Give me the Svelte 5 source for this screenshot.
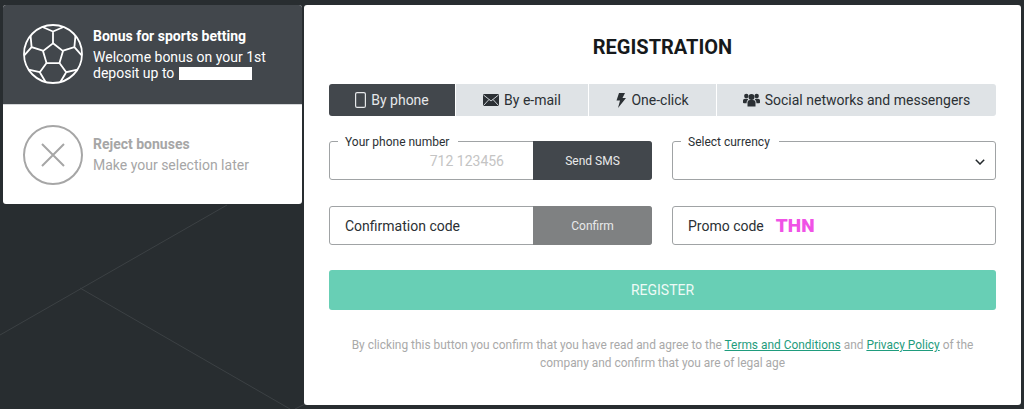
<script>
    const spokes = [0, 72, 144, 216, 288];
</script>

<div class="page">
    <svg class="lines" width="1024" height="409" viewBox="0 0 1024 409">
        <path d="M0 335L227 205M80 288L290 409M295 409L305 404" />
    </svg>

    <aside class="bonuses">
        <div class="bonus active">
            <svg class="bonus-icon" viewBox="-31 -31 62 62" width="62" height="62">
                <circle r="29" />
                <path d="M0 -10.7L10 -3L6.4 9.2H-6.4L-10 -3Z" />
                {#each spokes as angle}
                    <path transform="rotate({angle})" d="M0 -10.7V-22.5L-10.5 -27M0 -22.5L10.5 -27" />
                {/each}
            </svg>
            <div class="bonus-text">
                <strong>Bonus for sports betting</strong>
                <p>Welcome bonus on your 1st<br />deposit up to <span class="hidden-amount"></span></p>
            </div>
        </div>
        <div class="bonus">
            <svg class="bonus-icon" viewBox="-31 -31 62 62" width="62" height="62">
                <circle r="29" />
                <path d="M-11 -11L11 11M11 -11L-11 11" />
            </svg>
            <div class="bonus-text">
                <strong>Reject bonuses</strong>
                <p>Make your selection later</p>
            </div>
        </div>
    </aside>

    <main class="card">
        <h1>REGISTRATION</h1>

        <nav class="tabs">
            <button class="tab selected">
                <svg width="11" height="16" viewBox="0 0 11 16"><rect x="0.6" y="0.6" width="9.8" height="14.8" rx="1.5" fill="none" stroke="currentColor" stroke-width="1.2" /></svg>
                By phone
            </button>
            <button class="tab">
                <svg width="16" height="12" viewBox="0 0 16 12"><rect width="16" height="12" rx="1" fill="currentColor" /><path d="M0.5 1L8 7L15.5 1M0.5 11.5L6 5.5M15.5 11.5L10 5.5" fill="none" stroke="#dfe3e6" stroke-width="0.9" /></svg>
                By e-mail
            </button>
            <button class="tab">
                <svg width="10" height="15" viewBox="0 0 10 15"><path d="M3 0H9L6.5 5H10L2 15L4 7.5H0.5Z" fill="currentColor" /></svg>
                One-click
            </button>
            <button class="tab">
                <svg width="17" height="14" viewBox="0 0 17 14">
                    <g fill="currentColor">
                        <circle cx="8.5" cy="4" r="3" />
                        <circle cx="3.3" cy="3" r="2.2" />
                        <circle cx="13.7" cy="3" r="2.2" />
                        <path d="M4.5 13.5V9.5Q4.5 7 7 7H10Q12.5 7 12.5 9.5V13.5Z" />
                        <path d="M0 9.5V7.5Q0 5.8 2 5.8H4.6Q4.8 6.3 5.2 6.7Q3.6 7.4 3.6 9.5V10.2H1Q0 10.2 0 9.5Z" />
                        <path d="M17 9.5V7.5Q17 5.8 15 5.8H12.4Q12.2 6.3 11.8 6.7Q13.4 7.4 13.4 9.5V10.2H16Q17 10.2 17 9.5Z" />
                    </g>
                </svg>
                Social networks and messengers
            </button>
        </nav>

        <div class="fields">
            <div class="field">
                <span class="legend">Your phone number</span>
                <span class="phone-value">712 123456</span>
                <button class="action dark">Send SMS</button>
            </div>
            <div class="field">
                <span class="legend">Select currency</span>
                <svg class="chevron" width="10" height="6" viewBox="0 0 10 6"><path d="M0.8 0.8L5 5L9.2 0.8" fill="none" stroke="#23282b" stroke-width="1.5" /></svg>
            </div>
            <div class="field">
                <span class="placeholder">Confirmation code</span>
                <button class="action grey">Confirm</button>
            </div>
            <div class="field">
                <span class="placeholder">Promo code</span>
                <span class="promo">THN</span>
            </div>
        </div>

        <button class="register">REGISTER</button>

        <p class="terms">
            By clicking this button you confirm that you have read and agree to the <a href="#terms">Terms and Conditions</a> and <a href="#privacy">Privacy Policy</a> of the company and confirm that you are of legal age
        </p>
    </main>
</div>

<style>
    :global(body) {
        margin: 0;
        background: #282d30;
    }

    .page {
        position: relative;
        width: 1024px;
        height: 409px;
        box-sizing: border-box;
        padding: 5px 3px 4px 3px;
        display: flex;
        gap: 2px;
        align-items: flex-start;
        overflow: hidden;
        background: #282d30;
        font-family: Roboto, "Liberation Sans", sans-serif;
    }

    .lines {
        position: absolute;
        left: 0;
        top: 0;
    }

    .lines path {
        fill: none;
        stroke: #3c4144;
        stroke-width: 1;
    }

    .bonuses {
        position: relative;
        width: 299px;
        height: 199px;
        flex: none;
        border-radius: 3px;
        overflow: hidden;
        background: #fff;
    }

    .bonus {
        height: 99px;
        box-sizing: border-box;
        display: flex;
        align-items: center;
        gap: 9px;
        padding: 0 0 0 19px;
        color: #a6a6a6;
    }

    .bonus.active {
        height: 100px;
        padding-bottom: 1px;
        background: #42474c;
        color: #fff;
        border-bottom: 1px solid #d5d7d9;
    }

    .bonus-icon {
        flex: none;
    }

    .bonus-icon circle,
    .bonus-icon path {
        fill: none;
        stroke: #a6a6a6;
        stroke-width: 2;
    }

    .bonus.active .bonus-icon circle,
    .bonus.active .bonus-icon path {
        stroke: #fff;
        stroke-width: 1.8;
    }

    .bonus-text strong {
        display: block;
        margin-top: -1px;
        font-size: 14px;
        line-height: 18px;
        font-weight: 700;
    }

    .bonus-text p {
        margin: 4px 0 0;
        font-size: 14px;
        line-height: 16px;
    }

    .hidden-amount {
        display: inline-block;
        width: 73px;
        height: 13px;
        margin-left: 1px;
        vertical-align: -2px;
        background: #fff;
    }

    .card {
        position: relative;
        flex: 1;
        height: 400px;
        box-sizing: border-box;
        padding: 0 25px;
        background: #fff;
        border-radius: 3px;
    }

    h1 {
        margin: 0;
        padding-top: 31px;
        height: 79px;
        box-sizing: border-box;
        font-size: 20px;
        line-height: 22px;
        font-weight: 700;
        text-align: center;
        color: #16191b;
    }

    .tabs {
        display: grid;
        grid-template-columns: 126px 132px 127px 1fr;
        gap: 1px;
        height: 32px;
        border-radius: 3px;
        overflow: hidden;
    }

    .tab {
        display: flex;
        align-items: center;
        justify-content: center;
        gap: 5px;
        padding: 0;
        border: none;
        background: #dfe3e6;
        color: #2b3034;
        font-family: inherit;
        font-size: 14px;
    }

    .tab.selected {
        background: #42474c;
        color: #e6e8ea;
    }

    .fields {
        display: grid;
        grid-template-columns: 323px 324px;
        grid-auto-rows: 39px;
        gap: 26px 20px;
        margin-top: 25px;
    }

    .field {
        position: relative;
        display: flex;
        align-items: center;
        box-sizing: border-box;
        border: 1px solid #a0a3a5;
        border-radius: 3px;
        padding-left: 15px;
        background: #fff;
    }

    .legend {
        position: absolute;
        left: 8px;
        top: -7px;
        padding: 0 9px 0 7px;
        background: #fff;
        font-size: 12px;
        line-height: 14px;
        color: #2b3034;
    }

    .phone-value {
        position: absolute;
        right: 147px;
        top: 11px;
        font-size: 14px;
        line-height: 16px;
        color: #c4c4c4;
    }

    .placeholder {
        font-size: 14px;
        color: #2b3034;
    }

    .promo {
        margin-left: 12px;
        font-size: 19px;
        font-weight: 900;
        color: #f052e6;
    }

    .chevron {
        position: absolute;
        right: 10px;
        top: 17px;
    }

    .action {
        position: absolute;
        right: -1px;
        top: -1px;
        bottom: -1px;
        width: 119px;
        border: none;
        border-radius: 0 3px 3px 0;
        color: #e8e9ea;
        font-family: inherit;
        font-size: 12px;
    }

    .action.dark {
        background: #42474c;
    }

    .action.grey {
        background: #7f8182;
    }

    .register {
        display: block;
        width: 100%;
        height: 40px;
        margin-top: 25px;
        border: none;
        border-radius: 3px;
        background: #68cfb5;
        color: #eefaf6;
        font-family: inherit;
        font-size: 14px;
    }

    .terms {
        margin: 26px 0 0;
        padding: 0 15px;
        font-size: 11.92px;
        line-height: 18px;
        text-align: center;
        color: #a9a9a9;
    }

    .terms a {
        color: #1f9c7d;
    }
</style>
